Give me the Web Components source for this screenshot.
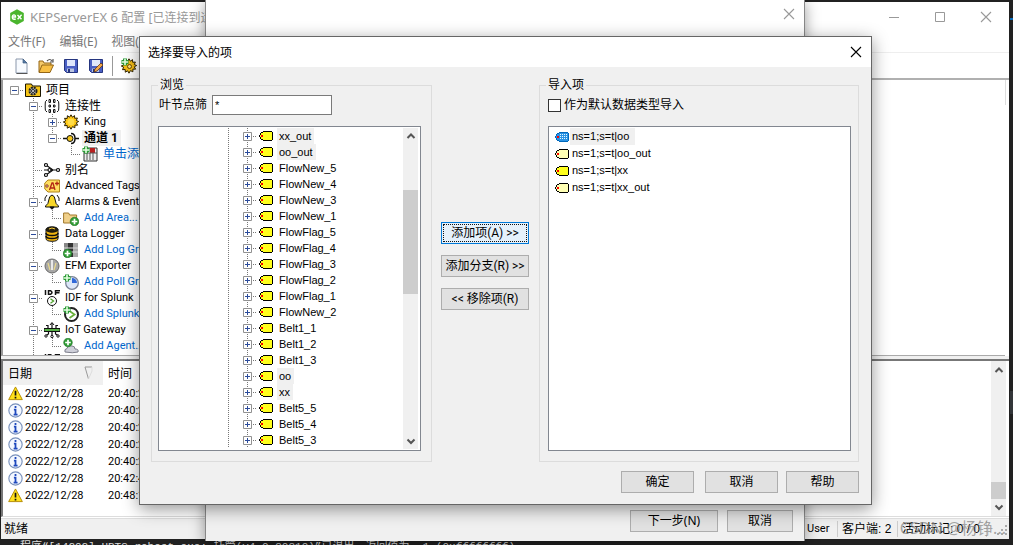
<!DOCTYPE html>
<html lang="zh-CN">
<head>
<meta charset="utf-8">
<title>KEPServerEX 6 配置</title>
<style>
html,body{margin:0;height:100%;overflow:hidden}
body{background:#232323;font:12px/16px "Liberation Sans","Noto Sans CJK SC",sans-serif;color:#000}
</style>
</head>
<body>
<desk-top></desk-top>
<script>
const define=(name,html,setup)=>customElements.define(name,class extends HTMLElement{
  constructor(){super();this.attachShadow({mode:'open'});}
  connectedCallback(){
    if(this.ready)return;this.ready=true;
    const t=document.createElement('template');
    t.innerHTML=typeof html==='function'?html(this):html;
    this.shadowRoot.append(t.content.cloneNode(true));
    if(setup)setup(this);
  }
});
const plus=(x,y)=>`<path d="M${x} ${y-3.5}v7M${x-3.5} ${y}h7" stroke="#2b9a36" stroke-width="4"/><path d="M${x} ${y-3}v6M${x-3} ${y}h6" stroke="#e4ffe0" stroke-width="1.6"/>`;
const plusBall=(x,y)=>`<circle cx="${x}" cy="${y}" r="4.3" fill="#2f9c34" stroke="#1a6b20" stroke-width=".6"/><path d="M${x} ${y-2.8}v5.600M${x-2.8} ${y}h5.600" stroke="#fff" stroke-width="1.700"/>`;
const gear='<path d="M8 .8l1.4 2.4 2.1-1.6.2 2.7 2.7-.3-1.1 2.5 2.4 1-2.4 1.3 1.3 2.4-2.7-.1v2.7l-2.4-1.2L8 15.2l-1.4-2.4-2.3 1.4-.1-2.7-2.7.2 1.1-2.5L.3 8l2.4-1.2L1.5 4.3l2.7.2.2-2.8 2.2 1.5z"';
const disk='<path d="M1.5 1.5h13v13h-11l-2-2z" fill="#4a5fc4" stroke="#25357f"/><path d="M4 2h8v6H4z" fill="#dfe6fb"/><path d="M4 10.500h7V14H4z" fill="#b9c3df"/><path d="M5 11h2v3H5z" fill="#25357f"/>';
const tag=(fill,line,dots='')=>`<path d="M4 0h9v1h1v8h-1v1H4V9H2V8H1V6H0V4h1V2h1V1h2z" fill="${line}"/><path d="M4 1h9v8H4V8H2V6H1V4h1V2h2z" fill="${fill}"/>${dots}<path d="M2 4h2v2H2z" fill="#f00"/>`;
const icons={
 logo:'<path d="M8 .2l6.800 3.900v7.800L8 15.800 1.200 11.900V4.100z" fill="#4ab52d"/><path d="M3.300 8h3.200c0-1.500-.8-2.100-1.600-2.100S3.300 6.700 3.300 8s.7 2.200 1.800 2.200 1.100-.2 1.500-.5M8.500 6l4 4.300M12.600 5.700l-4 4.600" fill="none" stroke="#fff" stroke-width="1.400"/>',
 file:'<path d="M3 1h7l4 4v10H3z" fill="#f8fbff" stroke="#8a97ab"/><path d="M10 1v4h4z" fill="#567ba5" stroke="#3d5d83" stroke-width=".7"/><path d="M3.500 15.500h11" stroke="#555" stroke-width="1"/>',
 open:'<path d="M1 14V3h4l1 2h7v3" fill="#f4c96a" stroke="#946617"/><path d="M1 14.500L4 7h11.500L12 14.500z" fill="#f7bf45" stroke="#946617"/><path d="M9 3q3-3 5 0m1-2v3h-3" fill="none" stroke="#555" stroke-width="1.200"/>',
 save:disk,
 saveas:disk+'<path d="M6 14l1-3 6-6 2 2-6 6z" fill="#efa64b" stroke="#633a13" stroke-width=".8"/>',
 gear:gear+' fill="#ffc815" stroke="#2d2100" stroke-width="1"/><circle cx="8" cy="8" r="3.300" fill="#ffdc48"/>',
 gearplus:gear+' fill="#f5bd16" stroke="#2d2100" stroke-width="1"/><circle cx="8.500" cy="8.500" r="2" fill="#ffe27a" stroke="#6b4a00"/>'+plus(4,4),
 project:'<path d="M.5 3V2h6l1 2h8v10.500H.5z" fill="#f6c416" stroke="#1a1500"/><circle cx="8" cy="9" r="3.500" fill="#bbb" stroke="#222" stroke-width="2" stroke-dasharray="2 .8"/><circle cx="8" cy="9" r="1.500" fill="#eee" stroke="#222"/>',
 conn:'<path d="M3 2Q.8 3 1.200 6v4q-.4 3 1.800 4M13 2q2.200 1 1.800 4v4q.4 3-1.800 4" fill="none" stroke="#111"/><path d="M5 1.500h1.500v3H5zM9.500 1.500H11v3H9.500zM5 11.500h1.500v3H5zM9.500 11.500H11v3H9.500zM5 7h1.500v2H5zM9.500 7H11v2H9.500z" fill="none" stroke="#111"/>',
 channel:'<path d="M0 8.500h5M8 3.500q4 0 4 5t-4 5M12 8.500h4" fill="none" stroke="#111" stroke-width="1.500"/><circle cx="7" cy="8.500" r="3" fill="#f3c51a" stroke="#111"/>',
 device:'<path d="M2 2h13v13H2z" fill="#eee" stroke="#333"/><path d="M8 2h5v5H8z" fill="#b92020"/><path d="M5 6v8m3-7v7m3-7v7M2 7h13" stroke="#555"/>'+plus(4,4),
 alias:'<g fill="#fff" stroke="#111" stroke-width="1.200"><path d="M2 3l7 5-7 5M0 8h14" fill="none"/><circle cx="2" cy="3" r="1.500"/><circle cx="2" cy="13" r="1.500"/><circle cx="5.500" cy="8" r="1.500"/><circle cx="14" cy="8" r="1.500"/></g>',
 atag:'<path d="M4 2h11.500v12H4L.8 11V5z" fill="#ffdf62" stroke="#b08216"/><circle cx="3" cy="8" r="1.200" fill="#fff" stroke="#8b2b15"/><path d="M5.500 12L8 5h1l2 7M6.500 10h4M11 5.500h4M13 3.500v4" fill="none" stroke="#b22514" stroke-width="1.300"/>',
 bell:'<path d="M3 1Q0 4 1 7M13 1q3 3 2 6" fill="none" stroke="#111"/><path d="M8 1q3 1 3.200 5t3.300 6v1H1.500v-1Q4.600 10 4.800 6T8 1z" fill="#f7d627" stroke="#111"/><path d="M6 13q2 4 4 0z" fill="#111" stroke="#111"/>',
 area:'<path d="M.6 13V3h5l1 2h7v8z" fill="#f0d08a" stroke="#a2792c"/>'+plusBall(11.500,11.500),
 db:'<path d="M2 3.500v9q0 2.800 6 2.800t6-2.800v-9z" fill="#f0b50f" stroke="#111"/><path d="M2 7q0 2.500 6 2.500T14 7M2 10q0 2.500 6 2.500t6-2.500" fill="none" stroke="#111" stroke-width="1.500"/><ellipse cx="8" cy="3.500" rx="6" ry="2.700" fill="#28220c" stroke="#111"/><path d="M5 3q3-2 6 0" stroke="#f7cb39" fill="none"/>',
 log:'<path d="M1 1h14v14H1z" fill="#888"/><path d="M5 1h5v14H5z" fill="#333"/><path d="M10 1h5v14h-5z" fill="#aaa"/><path d="M1 6h14M1 10h14" stroke="#ddd"/>'+plusBall(4.500,11.500),
 efm:'<circle cx="8" cy="8" r="7" fill="#a6a6a6" stroke="#6a6a6a"/><path d="M8 2v10" stroke="#fff" stroke-width="1.500"/><path d="M4 5l2 7M12 5l-2 7" stroke="#e8d88b" stroke-width="1.200"/>',
 poll:'<circle cx="9" cy="9" r="6.300" fill="#dce6f8" stroke="#7a8296" stroke-width="1.300"/><path d="M9 4v5h5A5 5 0 0 0 9 4z" fill="#3168d8"/>'+plus(4,4),
 idf:'<g fill="none" stroke="#111"><path d="M1.500 0v5M4.500 .7h2q3 1.800 0 3.600h-2zM11.500 5V.7H16M11.500 2.800h4" stroke-width="1.500"/><circle cx="8" cy="11" r="4.500"/></g><path d="M6.500 8.800l3 2.200-3 2.200" fill="none" stroke="#52a331" stroke-width="1.400"/>',
 splunk:'<circle cx="8.500" cy="8.500" r="6.500" fill="#fff" stroke="#222" stroke-width="2"/><path d="M6.500 5l5 3.500-5 3.500" fill="none" stroke="#6ab03b" stroke-width="1.800"/>'+plus(4,4),
 iot:'<path d="M0 6.500h16v3H0z" fill="#57b147" stroke="#111"/><path d="M8 6V1M4 6V3.500H2M12 6V3.500h2M8 10v4M4.500 10v2L2 13.500M11.500 10v2l2.500 1.500" fill="none" stroke="#111" stroke-width="1.200"/><g fill="#fff" stroke="#111"><circle cx="8" cy="14.500" r="1.200"/><circle cx="2" cy="14" r="1.200"/><circle cx="14" cy="14" r="1.200"/></g><path d="M6 3l2-2.500L10 3" fill="none" stroke="#111"/>',
 agent:'<path d="M2 14q-1-3 2-3.500Q5 7 9 8q3 0 3 3 4 0 3 3-5 1.500-13 0z" fill="#cfd0da" stroke="#7d7e8b"/>'+plusBall(5,4.500),
 warn:'<path d="M8 1L15.300 14.500H.7z" fill="#ffe11a" stroke="#b38a00" stroke-linejoin="round"/><path d="M8 5v5M8 11.500v1.800" stroke="#111" stroke-width="1.800"/>',
 info:'<circle cx="8" cy="8" r="7.100" fill="#f4f8ff" stroke="#7890bb" stroke-width="1.200"/><path d="M8 3.300v2M6.300 7H8v5M6 12.300h4.200" stroke="#1f49bd" stroke-width="1.900" fill="none"/>',
 tag:tag('#ffff1c','#000'),
 tagpale:tag('#ffffb4','#000'),
 tagblue:tag('#2b93e4','#0068bb','<path d="M5 2.500h8M5 4.500h8M5 6.500h8" stroke="#e4f8ff" stroke-dasharray="1 1"/>'),
 close:'<path d="M3 3l10 10M13 3L3 13" stroke="currentColor" stroke-width="1.100"/>',
 min:'<path d="M3 8.500h10" stroke="currentColor"/>',
 max:'<path d="M3.500 3.500h9v9h-9z" fill="none" stroke="currentColor"/>',
 up:'<path d="M4.500 10L8 6.500l3.500 3.500" fill="none" stroke="#555" stroke-width="2"/>',
 down:'<path d="M4.500 6.500L8 10l3.500-3.500" fill="none" stroke="#555" stroke-width="2"/>'
};
define('ui-icon',el=>{
  const n=el.getAttribute('name'),isTag=n.startsWith('tag'),s=el.getAttribute('size')||16;
  return `<style>:host{display:inline-flex;flex:none;justify-content:center}svg{display:block}</style>
  <svg width="${isTag?14:s}" height="${isTag?10:s}" viewBox="${isTag?'0 0 14 10':'0 0 16 16'}" ${isTag?'shape-rendering="crispEdges"':''} fill="#000" aria-hidden="true">${icons[n]}</svg>`;
});

/* Classic push button */
define('win-button',`<style>
:host{display:block}
button{box-sizing:border-box;width:100%;height:22px;padding:0;border:1px solid #adadad;background:#e1e1e1;font:inherit;color:#000;line-height:18px;white-space:nowrap}
:host([focused]) button{border-color:#0078d7;background:#e5f1fb;outline:1px dotted #111;outline-offset:-3px}
</style><button type="button"><slot></slot></button>`);

/* Borderless caption button */
define('caption-button',el=>`<style>
:host{display:block}
button{display:flex;align-items:center;justify-content:center;width:46px;height:28px;padding:0;border:0;background:none;color:inherit}
</style><button type="button" aria-label="${el.getAttribute('label')}"><ui-icon name="${el.getAttribute('icon')}"></ui-icon></button>`);

define('scroll-bar',`<style>
:host{display:flex;flex-direction:column;align-items:center;width:15px;background:#f0f0f0}
.track{flex:1;display:flex;flex-direction:column;align-self:stretch}
.before{flex:var(--before)}.thumb{flex:var(--thumb);background:#cdcdcd}.after{flex:var(--after)}
</style><ui-icon name="up"></ui-icon><div class="track"><i class="before"></i><i class="thumb"></i><i class="after"></i></div><ui-icon name="down"></ui-icon>`);

/* Tree row. guides: one letter per level: "." blank, "|" line, "T" branch, "L" last branch, "R" root;
   box is "+" or "-" for an expander on the last level. */
define('tree-row',el=>{
  const g=el.getAttribute('guides'),box=el.getAttribute('box');
  const cells=[...g].map((c,i)=>{
    const k={'.':'','|':'v','T':'v h','L':'up h','R':'h'}[c];
    return `<span class="cell ${k}">${box&&i===g.length-1?`<svg width="9" height="9"><path d="M.5.5h8v8h-8z" fill="#fff" stroke="#919191"/><path d="M2 4.500h5${box==='+'?'M4.500 2v5':''}" stroke="#2b4b9b"/></svg>`:''}</span>`;
  }).join('');
  return `<style>
:host{display:flex;align-items:center;height:16px;white-space:nowrap}
.cell{flex:none;position:relative;width:19px;height:16px;display:flex;align-items:center;justify-content:center}
.cell::before,.cell::after{position:absolute}
.v::before,.up::before{content:"";left:9px;top:0;width:1px;height:16px;background:repeating-linear-gradient(#777 0 1px,transparent 1px 2px)}
.up::before{height:8px}
.h::after{content:"";left:9px;right:0;top:8px;height:1px;background:repeating-linear-gradient(90deg,#777 0 1px,transparent 1px 2px)}
svg{position:relative;z-index:1}
ui-icon{width:16px;margin:0 3px 0 1px}
.text{padding:0 3px 0 2px;line-height:16px}
:host([hot]) .text{background:#f0f0f0}
:host([bold]) .text{font-weight:bold}
a{color:#0066cc;text-decoration:none}
</style>${cells}<ui-icon name="${el.getAttribute('icon')}"></ui-icon><span class="text">${el.hasAttribute('link')?'<a href="#"><slot></slot></a>':'<slot></slot>'}</span>`;
});

define('project-tree',()=>{
  const rows=[['R','-','project','项目'],['.T','-','conn','连接性'],['.|T','+','gear','King'],['.|L','-','channel','通道 1','bold hot'],
  ['.|.L','','device','单击添加设备','link'],['.T','','alias','别名'],['.T','','atag','Advanced Tags'],['.T','-','bell','Alarms &amp; Events'],
  ['.|L','','area','Add Area...','link'],['.T','-','db','Data Logger'],['.|L','','log','Add Log Group','link'],['.T','-','efm','EFM Exporter'],
  ['.|L','','poll','Add Poll Group','link'],['.T','-','idf','IDF for Splunk'],['.|L','','splunk','Add Splunk...','link'],['.T','-','iot','IoT Gateway'],['.|L','','agent','Add Agent...','link'],['.T','','idf','']];
  return `<style>
:host{display:block;overflow:hidden;background:#fff;border-left:2px solid #999;border-bottom:1px solid #aaa;padding:2px 0 0 2px;font:11px/16px Roboto,"Noto Sans CJK SC",sans-serif}
.cjk{font-size:12px}
</style>${rows.map(r=>`<tree-row class="${/[^\x00-\x7f]/.test(r[3])?'cjk':''}" guides="${r[0]}" box="${r[1]}" icon="${r[2]}" ${r[4]||''}>${r[3]}</tree-row>`).join('')}`;
});

define('event-log',()=>{
  const rows=[['warn','20:40:21'],['info','20:40:21'],['info','20:40:21'],['info','20:40:21'],['info','20:40:21'],['info','20:42:46'],['warn','20:48:12']];
  return `<style>
:host{display:flex;background:#fff;border-left:2px solid #777;border-top:2px solid #777;border-bottom:1px solid #ddd;font:11px/17px Roboto,"Noto Sans CJK SC",sans-serif;overflow:hidden;padding-right:3px}
.list{flex:1;min-width:0}
table{border-collapse:collapse;table-layout:fixed;width:100%}
col.date{width:100px}
th{font:12px/24px "Noto Sans CJK SC",sans-serif;height:24px;padding:0 5px;text-align:left}
th:first-child{background:#f0f0f0}
td{height:17px;padding:0 5px}
th span,td span{display:flex;align-items:center;justify-content:space-between}
td span{justify-content:flex-start;gap:2px}
scroll-bar{--before:106;--thumb:17;--after:0;padding:1px 0}
</style><div class="list"><table><colgroup><col class="date"><col></colgroup>
<thead><tr><th><span>日期<svg width="16" height="14" viewBox="0 0 16 14"><path d="M10 1H3l3.500 12" fill="none" stroke="#999"/><path d="M10 1v4L6.500 13" fill="none" stroke="#ddd"/></svg></span></th><th>时间</th></tr></thead>
<tbody>${rows.map(r=>`<tr><td><span><ui-icon name="${r[0]}" size="15"></ui-icon>2022/12/28</span></td><td>${r[1]}</td></tr>`).join('')}</tbody></table></div><scroll-bar></scroll-bar>`;
});

define('main-window',`<style>
:host{display:flex;flex-direction:column;background:#fff;overflow:hidden}
header{display:flex;align-items:center;height:30px;padding-left:8px;color:#999}
h1{flex:1;margin:0;padding-left:5px;font:12px/16px "Noto Sans","Noto Sans CJK SC",sans-serif;white-space:nowrap}
h1 span{font-size:13px}
nav{display:flex;align-items:center;gap:14px;height:20px;padding-left:7px;font:12px/16px "Noto Sans","Noto Sans CJK SC",sans-serif;border-bottom:1px solid #eee}
nav a{color:#777;text-decoration:none}
.tools{display:flex;align-items:center;gap:9px;height:25px;padding-left:12px;border-bottom:2px solid #b0b0b0}
.tools button{display:flex;border:0;padding:0;background:none}
.tools i{width:1px;height:20px;background:#999;margin:0 -1px}
.main{flex:1;min-height:0;display:flex}
project-tree{flex:1}
.edge{width:3px;background:#fff;border-left:1px solid #ddd;height:25px}
event-log{flex:none;height:155px;margin-top:3px;box-shadow:0 -3px #f0f0f0}
footer{display:flex;align-items:center;height:20px;margin-top:1px;border-top:1px solid #ddd;background:#f0f0f0;padding-left:3px}
footer span{flex:none;box-sizing:border-box}
footer .ready{flex:1}
.user{width:30px;font:11px/16px Roboto,sans-serif}
.clients{width:60px;border-left:1px solid #ccc;padding-left:4px}
.tags{width:89px;border-left:1px solid #ccc;padding-left:4px}
.grip{width:23px;border-left:1px solid #ccc;display:flex;justify-content:flex-end;align-items:flex-end;height:16px}
</style>
<header><ui-icon name="logo"></ui-icon><h1><span>KEPServerEX 6 </span>配置 [已连接到运行时]</h1>
<caption-button icon="min" label="最小化"></caption-button><caption-button icon="max" label="最大化"></caption-button><caption-button icon="close" label="关闭"></caption-button></header>
<nav><a href="#">文件(F)</a><a href="#">编辑(E)</a><a href="#">视图(V)</a></nav>
<div class="tools"><button aria-label="新建"><ui-icon name="file"></ui-icon></button><button aria-label="打开"><ui-icon name="open"></ui-icon></button><button aria-label="保存"><ui-icon name="save"></ui-icon></button><button aria-label="另存为"><ui-icon name="saveas"></ui-icon></button><i></i><button aria-label="新建通道"><ui-icon name="gearplus"></ui-icon></button></div>
<div class="main"><project-tree></project-tree><div class="edge"></div></div>
<event-log></event-log>
<footer><span class="ready">就绪</span><span class="user">User</span><span class="clients">客户端: 2</span><span class="tags">活动标记: 0 / 0</span><span class="grip"><svg width="12" height="12" viewBox="0 0 12 12" fill="#aaa"><path d="M8 0h2v2H8zM4 4h2v2H4zM8 4h2v2H8zM0 8h2v2H0zM4 8h2v2H4zM8 8h2v2H8z"/></svg></span></footer>`);

define('wizard-window',`<style>
:host{display:flex;flex-direction:column;background:#f0f0f0;border:1px solid #888;border-width:0 1px;box-sizing:border-box;box-shadow:0 3px 14px rgba(0,0,0,.4)}
header{flex:none;display:flex;justify-content:flex-end;height:200px;background:#fff;color:#999}
caption-button{margin-right:-8px}
.body{flex:1}
footer{display:flex;gap:9px;justify-content:flex-end;padding:0 11px 9px;font:12px/16px "Noto Sans","Noto Sans CJK SC",sans-serif}
.next{width:88px}.cancel{width:66px}
</style><header><caption-button icon="close" label="关闭"></caption-button></header><div class="body"></div>
<footer><win-button class="next">下一步(N)</win-button><win-button class="cancel">取消</win-button></footer>`);

define('group-box',el=>`<style>
:host{display:flex;min-width:0}
fieldset{flex:1;min-width:0;margin:0;border:1px solid #dcdcdc;padding:2px var(--right) 10px var(--left);display:flex;flex-direction:column}
legend{padding:0 2px;margin-left:calc(6px - var(--left));line-height:16px}
</style><fieldset><legend>${el.getAttribute('label')}</legend><slot></slot></fieldset>`);

define('browse-tree',()=>{
  const names='xx_out oo_out FlowNew_5 FlowNew_4 FlowNew_3 FlowNew_1 FlowFlag_5 FlowFlag_4 FlowFlag_3 FlowFlag_2 FlowFlag_1 FlowNew_2 Belt1_1 Belt1_2 Belt1_3 oo xx Belt5_5 Belt5_4 Belt5_3'.split(' ');
  return `<style>
:host{display:flex;box-sizing:border-box;border:1px solid #828790;background:#fff;padding:1px 2px 1px 60px;overflow:hidden;font:11px/16px "Liberation Sans",sans-serif}
.rows{flex:1}
scroll-bar{--before:46;--thumb:103;--after:139}
</style><div class="rows">${names.map(n=>`<tree-row guides="|T" box="+" icon="tag" ${/^(oo|xx)/.test(n)?'hot':''}>${n}</tree-row>`).join('')}</div><scroll-bar></scroll-bar>`;
});

define('import-list',()=>`<style>
:host{display:block;box-sizing:border-box;border:1px solid #828790;background:#fff;padding:1px 6px;font:11px/17px "Liberation Sans",sans-serif}
ul{margin:0;padding:0;list-style:none}
li{display:flex;align-items:center;gap:1px;height:17px}
span{padding:0 6px 0 2px}
li:first-child span{background:#f0f0f0}
</style><ul>${[['tagblue','ns=1;s=t|oo'],['tagpale','ns=1;s=t|oo_out'],['tag','ns=1;s=t|xx'],['tagpale','ns=1;s=t|xx_out']].map(r=>`<li><ui-icon name="${r[0]}"></ui-icon><span>${r[1]}</span></li>`).join('')}</ul>`);

define('import-dialog',`<style>
:host{display:flex;flex-direction:column;box-sizing:border-box;border:1px solid #666;background:#f0f0f0;box-shadow:0 4px 16px rgba(0,0,0,.42)}
header{display:flex;align-items:center;height:30px;background:#fff;padding-left:8px}
h2{flex:1;margin:0;font:12px/16px "Noto Sans CJK SC",sans-serif}
caption-button{margin-right:-8px}
.body{flex:1;min-height:0;display:flex;padding:10px 12px 0 11px}
.browse{flex:0 0 281px;--left:6px;--right:10px}
.import{flex:1;--left:8px;--right:7px}
.mid{flex:none;width:88px;margin:0 10px 0 9px;display:flex;flex-direction:column;gap:11px;padding-top:145px;font:12px/16px Roboto,"Noto Sans CJK SC",sans-serif}
.field{display:flex;align-items:center;height:20px;margin-bottom:11px;white-space:nowrap}
.field label{margin-right:5px;padding-left:1px}
.field input[type=text]{box-sizing:border-box;width:120px;height:20px;border:1px solid #7a7a7a;background:#fff;padding:0 2px;font:11px "Liberation Sans",sans-serif}
.field input[type=checkbox]{appearance:none;box-sizing:border-box;width:13px;height:13px;margin:0 2px 0 0;border:1px solid #333;background:#fff}
browse-tree,import-list{flex:1;min-height:0}
footer{display:flex;justify-content:flex-end;padding:9px 12px 11px}
footer win-button{width:73px}
.ok{margin-right:11px}.cancel{margin-right:8px}
</style>
<header><h2>选择要导入的项</h2><caption-button icon="close" label="关闭"></caption-button></header>
<div class="body">
<group-box class="browse" label="浏览"><div class="field"><label for="filter">叶节点筛</label><input id="filter" type="text" value="*"></div><browse-tree></browse-tree></group-box>
<div class="mid"><win-button focused>添加项(A) &gt;&gt;</win-button><win-button>添加分支(R) &gt;&gt;</win-button><win-button>&lt;&lt; 移除项(R)</win-button></div>
<group-box class="import" label="导入项"><div class="field"><input id="dflt" type="checkbox"><label for="dflt">作为默认数据类型导入</label></div><import-list></import-list></group-box>
</div>
<footer><win-button class="ok">确定</win-button><win-button class="cancel">取消</win-button><win-button>帮助</win-button></footer>`);

define('desk-top',`<style>
:host{display:block;position:relative;height:100%;overflow:hidden;background:linear-gradient(#0a6ebd,#0a6ebd) right 18px/3px 2px no-repeat,linear-gradient(#333639,#333639) right 391px/3px 23px no-repeat,#212121}
main-window,wizard-window,import-dialog,.console,.mark{position:absolute}
.console{left:20px;bottom:-10px;margin:0;font:11px/16px "Liberation Mono","Noto Sans CJK SC",monospace;color:#ddd;white-space:pre}
main-window{inset:2px 4px 6px 1px}
wizard-window{inset:0 208px 4px 205px}
import-dialog{inset:36px 141px 40px 139px}
.mark{right:7px;bottom:7px;font:16px/20px "Noto Sans","Noto Sans CJK SC",sans-serif;color:rgba(130,130,130,.7)}
</style>
<p class="console">程序“[14292] HBTS_robost.exe: 托管(v4.0.30319)”已退出，返回值为 -1 (0xffffffff)。</p>
<main-window></main-window><wizard-window></wizard-window><import-dialog></import-dialog>
<span class="mark">CSDN @杨铮...</span>`);
</script>
</body>
</html>
